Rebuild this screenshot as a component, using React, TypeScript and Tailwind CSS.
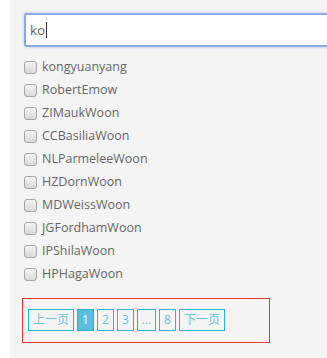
const names = [
  "kongyuanyang",
  "RobertEmow",
  "ZIMaukWoon",
  "CCBasiliaWoon",
  "NLParmeleeWoon",
  "HZDornWoon",
  "MDWeissWoon",
  "JGFordhamWoon",
  "IPShilaWoon",
  "HPHagaWoon",
];

const pages = ["上一页", "1", "2", "3", "...", "8", "下一页"];

const App = () => {
  return (
    <div
      className="flex h-[358px] w-[327px] overflow-hidden bg-white"
      style={{ fontFamily: '"Open Sans", "Noto Sans CJK SC", sans-serif' }}
    >
      <div className="ml-[10px] flex-1 bg-[#f4f4f4] pl-[14px] pt-[13px]">
        <div className="flex h-[34px] w-[320px] items-center rounded-[3px] border-2 border-[#8aaae6] bg-white pl-[4px] shadow-[0_0_3px_rgba(120,150,230,0.5)]">
          <span className="text-[13.5px] text-[#666]">ko</span>
          <span className="ml-[1px] h-[16px] w-px bg-[#333]" />
        </div>

        <ul className="mt-[9px] flex flex-col">
          {names.map((n) => (
            <li key={n} className="flex h-[23px] items-center">
              <span className="h-[13px] w-[13px] rounded-[3px] border border-[#a5a5a5] bg-gradient-to-b from-[#f4f4f4] to-[#d9d9d9]" />
              <span className="ml-[5px] text-[12.5px] text-[#666]">{n}</span>
            </li>
          ))}
        </ul>

        <div className="ml-[-2px] mt-[12px] flex h-[45px] w-[248px] items-start gap-[3px] border border-[#e53935] pl-[5px] pt-[10px]">
          {pages.map((p) => {
            const active = p === "1";
            const wide = p.length > 1 && p !== "...";
            return (
              <span
                key={p}
                className={
                  "flex h-[22px] items-center justify-center border border-[#1fbccd] text-[12px] " +
                  (wide ? "px-[4px] " : p === "..." ? "w-[19px] " : "w-[17px] ") +
                  (active ? "bg-[#5cbedb] text-white" : "text-[#6cc4e0]")
                }
              >
                {p}
              </span>
            );
          })}
        </div>
      </div>
    </div>
  );
};

export default App;
